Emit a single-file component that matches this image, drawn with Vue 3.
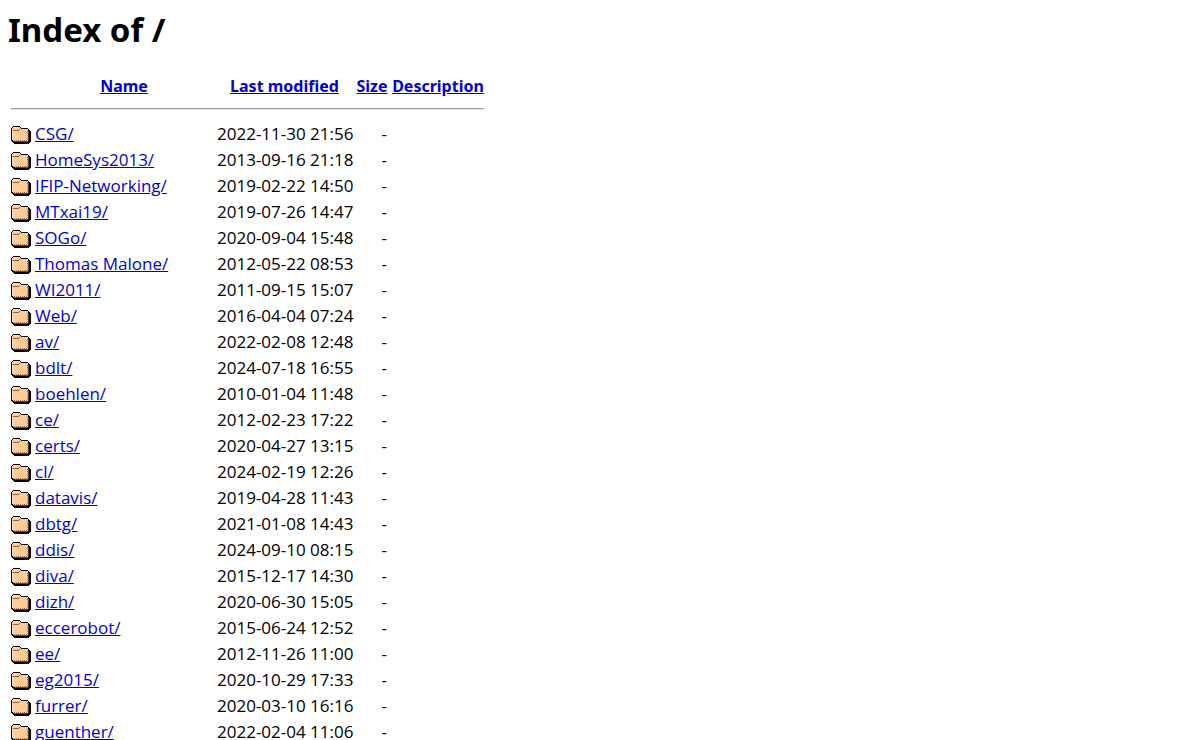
<script setup>
const entries = [
  ['CSG/', '2022-11-30 21:56'],
  ['HomeSys2013/', '2013-09-16 21:18'],
  ['IFIP-Networking/', '2019-02-22 14:50'],
  ['MTxai19/', '2019-07-26 14:47'],
  ['SOGo/', '2020-09-04 15:48'],
  ['Thomas Malone/', '2012-05-22 08:53'],
  ['WI2011/', '2011-09-15 15:07'],
  ['Web/', '2016-04-04 07:24'],
  ['av/', '2022-02-08 12:48'],
  ['bdlt/', '2024-07-18 16:55'],
  ['boehlen/', '2010-01-04 11:48'],
  ['ce/', '2012-02-23 17:22'],
  ['certs/', '2020-04-27 13:15'],
  ['cl/', '2024-02-19 12:26'],
  ['datavis/', '2019-04-28 11:43'],
  ['dbtg/', '2021-01-08 14:43'],
  ['ddis/', '2024-09-10 08:15'],
  ['diva/', '2015-12-17 14:30'],
  ['dizh/', '2020-06-30 15:05'],
  ['eccerobot/', '2015-06-24 12:52'],
  ['ee/', '2012-11-26 11:00'],
  ['eg2015/', '2020-10-29 17:33'],
  ['furrer/', '2020-03-10 16:16'],
  ['guenther/', '2022-02-04 11:06'],
]
</script>

<template>
  <main class="page">
    <h1>Index of /</h1>
    <table>
      <colgroup>
        <col class="c-icon"><col class="c-name"><col class="c-date"><col class="c-size"><col class="c-desc">
      </colgroup>
      <thead>
        <tr>
          <th></th>
          <th><a href="#name">Name</a></th>
          <th><a href="#modified">Last modified</a></th>
          <th><a href="#size">Size</a></th>
          <th><a href="#description">Description</a></th>
        </tr>
        <tr><th colspan="5"><hr></th></tr>
      </thead>
      <tbody>
        <tr v-for="[name, date] in entries" :key="name">
          <td>
            <svg class="folder" width="20" height="22" viewBox="0 0 20 22" shape-rendering="crispEdges" role="img" aria-label="[DIR]">
              <path fill="#000" d="M2 3h7v1h1v1h7v1h1v1h1v1h1v11h-1v1h-1v1H3v-1H2v-1H1v-1H0V5h1V4h1z" />
              <path fill="#ffcc99" d="M2 4h7v1h1v1h7v12H2v-1H1V5h1z" />
              <path fill="#996633" d="M2 7h6v1H2zM8 6h1v1H8z" />
              <path fill="#664422" d="M17 8h1v10h-1zM3 18h14v1H3z" />
              <path fill="#ffe5cc" d="M2 4h6v1H2zM1 8h1v8H1z" />
              <path stroke="#aa7744" stroke-dasharray="1 1" fill="none" d="M16.5 8v10M3 17.5h13" />
            </svg>
          </td>
          <td><a :href="'#' + encodeURIComponent(name)">{{ name }}</a></td>
          <td class="right">{{ date }}</td>
          <td class="right">-</td>
          <td></td>
        </tr>
      </tbody>
    </table>
  </main>
</template>

<style scoped>
.page {
  padding: 0 8px;
  font-family: "Noto Sans", "Open Sans", sans-serif;
  font-size: 16px;
  line-height: 22px;
  color: #000;
}
h1 {
  margin: 0 0 20px;
  padding-top: 8px;
  font-size: 33px;
  line-height: 44px;
}
table {
  table-layout: fixed;
  width: 479px;
  border-collapse: separate;
  border-spacing: 2px;
}
.c-icon { width: 22px; }
.c-name { width: 180px; }
.c-date { width: 137px; }
.c-size { width: 34px; }
th, td {
  padding: 1px;
  white-space: nowrap;
  vertical-align: middle;
}
th {
  text-align: center;
}
td {
  height: 22px;
  font-family: "Open Sans", "Noto Sans", sans-serif;
  font-size: 17px;
  text-align: left;
}
td.right {
  padding-right: 2px;
  text-align: right;
}
a {
  color: #0000dd;
}
hr {
  margin: 7px 0 9px;
  border: 0;
  border-top: 1px solid #999;
  border-bottom: 1px solid #e6e6e6;
}
.folder {
  display: block;
}
</style>
